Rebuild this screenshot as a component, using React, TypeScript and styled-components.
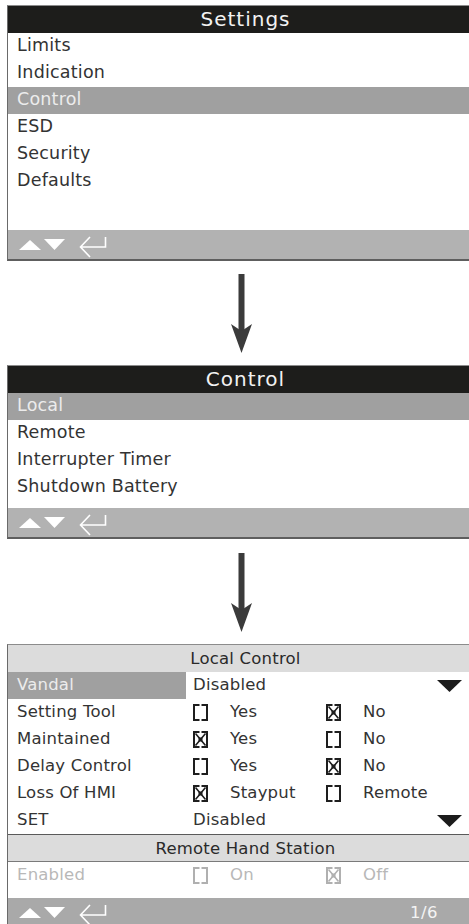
import React from "react";
import styled, { createGlobalStyle } from "styled-components";

const GlobalStyle = createGlobalStyle`
  html, body {
    margin: 0;
    padding: 0;
    background: #ffffff;
    overflow: hidden;
  }
  body {
    font-family: "DejaVu Sans", "Liberation Sans", sans-serif;
    color: #333333;
  }
`;

type Choice = { label: string; checked: boolean };

interface SettingItem {
  label: string;
  active?: boolean;
  dropdown?: string;
  options?: Choice[];
}

const localControl: SettingItem[] = [
  { label: "Vandal", active: true, dropdown: "Disabled" },
  {
    label: "Setting Tool",
    options: [
      { label: "Yes", checked: false },
      { label: "No", checked: true },
    ],
  },
  {
    label: "Maintained",
    options: [
      { label: "Yes", checked: true },
      { label: "No", checked: false },
    ],
  },
  {
    label: "Delay Control",
    options: [
      { label: "Yes", checked: false },
      { label: "No", checked: true },
    ],
  },
  {
    label: "Loss Of HMI",
    options: [
      { label: "Stayput", checked: true },
      { label: "Remote", checked: false },
    ],
  },
  { label: "SET", dropdown: "Disabled" },
];

// small drawings
const CheckBox: React.FC<{ checked: boolean; color: string }> = ({
  checked,
  color,
}) => (
  <svg width="15" height="17" viewBox="0 0 15 17">
    <path
      d="M6.5 1H1V16H6.5 M8.5 1H14V16H8.5"
      fill="none"
      stroke={color}
      strokeWidth="2"
    />
    {checked && (
      <>
        <path
          d="M2.5 2.5L12.5 14.5 M12.5 2.5L2.5 14.5"
          fill="none"
          stroke={color}
          strokeWidth="1.6"
        />
        <rect x="5.5" y="6.5" width="4" height="4" fill={color} />
      </>
    )}
  </svg>
);

const Caret = () => (
  <svg width="25" height="12" viewBox="0 0 25 12">
    <polygon points="0,0 25,0 12.5,12" fill="#1c1c1c" />
  </svg>
);

const DownArrow = () => (
  <svg width="21" height="79" viewBox="0 0 21 79">
    <rect x="7.5" y="0" width="6" height="57" fill="#3b3b3b" />
    <polygon points="0,50 10.5,57 21,50 10.5,79" fill="#3b3b3b" />
  </svg>
);

const NavIcons = () => (
  <NavGroup>
    <svg width="22" height="10" viewBox="0 0 22 10">
      <polygon points="0,10 22,10 11,0" fill="#ffffff" />
    </svg>
    <svg width="21" height="11" viewBox="0 0 21 11">
      <polygon points="0,0 21,0 10.5,11" fill="#ffffff" />
    </svg>
    <EnterIcon width="28" height="22" viewBox="0 0 28 22">
      <path
        d="M11 1L1.5 11L11 21 M1.5 11H26.5V1"
        fill="none"
        stroke="#ffffff"
        strokeWidth="1.6"
      />
    </EnterIcon>
  </NavGroup>
);

const MenuPanel: React.FC<{
  title: string;
  items: string[];
  active: number;
  spare: number;
}> = ({ title, items, active, spare }) => (
  <Panel>
    <Header $tone="dark">{title}</Header>
    {items.map((item, i) => (
      <MenuRow key={item} $active={i === active}>
        {item}
      </MenuRow>
    ))}
    <Spacer $h={spare} />
    <Footer $tone="light">
      <NavIcons />
    </Footer>
  </Panel>
);

export default function App() {
  return (
    <Page>
      <GlobalStyle />
      <MenuPanel
        title="Settings"
        items={["Limits", "Indication", "Control", "ESD", "Security", "Defaults"]}
        active={2}
        spare={35}
      />
      <ArrowRow>
        <DownArrow />
      </ArrowRow>
      <MenuPanel
        title="Control"
        items={["Local", "Remote", "Interrupter Timer", "Shutdown Battery"]}
        active={0}
        spare={7}
      />
      <ArrowRow $after={14}>
        <DownArrow />
      </ArrowRow>
      <Panel>
        <Header $tone="light">Local Control</Header>
        {localControl.map((row) => (
          <SettingRow key={row.label}>
            <SettingLabel $active={row.active}>{row.label}</SettingLabel>
            <ValueCell>
              {row.dropdown && (
                <>
                  <span>{row.dropdown}</span>
                  <CaretSlot>
                    <Caret />
                  </CaretSlot>
                </>
              )}
              {row.options?.map((opt) => (
                <Option key={opt.label}>
                  <CheckBox checked={opt.checked} color="#1e1e1e" />
                  <OptionText>{opt.label}</OptionText>
                </Option>
              ))}
            </ValueCell>
          </SettingRow>
        ))}
        <SubHeader>Remote Hand Station</SubHeader>
        <SettingRow $disabled>
          <SettingLabel>Enabled</SettingLabel>
          <ValueCell>
            <Option>
              <CheckBox checked={false} color="#b0b0b0" />
              <OptionText>On</OptionText>
            </Option>
            <Option>
              <CheckBox checked color="#b0b0b0" />
              <OptionText>Off</OptionText>
            </Option>
          </ValueCell>
        </SettingRow>
        <Spacer $h={9} />
        <Footer $tone="mid">
          <NavIcons />
          <PageCount>1/6</PageCount>
        </Footer>
      </Panel>
    </Page>
  );
}

const Page = styled.div`
  display: flex;
  flex-direction: column;
  align-items: flex-start;
  padding: 5px 0 0 7px;
`;

const Panel = styled.div`
  width: 476px;
  box-sizing: border-box;
  display: flex;
  flex-direction: column;
  border-top: 1px solid #8c8c8c;
  border-left: 1px solid #6a6a6a;
  border-bottom: 2px solid #5e5e5e;
`;

const Header = styled.div<{ $tone: "dark" | "light" }>`
  height: 27px;
  display: flex;
  align-items: center;
  justify-content: center;
  background: ${(p) => (p.$tone === "dark" ? "#1d1d1b" : "#dcdcdc")};
  color: ${(p) => (p.$tone === "dark" ? "#f2f2f2" : "#2a2a2a")};
  font-size: ${(p) => (p.$tone === "dark" ? "20px" : "16.5px")};
  letter-spacing: ${(p) => (p.$tone === "dark" ? "1px" : "0.2px")};
  padding-bottom: 1px;
  box-sizing: border-box;
`;

const SubHeader = styled.div`
  height: 28px;
  display: flex;
  align-items: center;
  justify-content: center;
  background: #dcdcdc;
  color: #2a2a2a;
  font-size: 16.5px;
  letter-spacing: 0.2px;
  border-top: 1px solid #5a5a5a;
  border-bottom: 1px solid #7a7a7a;
  box-sizing: border-box;
`;

const MenuRow = styled.div<{ $active?: boolean }>`
  height: 27px;
  line-height: 25px;
  padding-left: 9px;
  font-size: 17.5px;
  letter-spacing: 0.2px;
  background: ${(p) => (p.$active ? "#a0a0a0" : "transparent")};
  color: ${(p) => (p.$active ? "#ececec" : "#333333")};
`;

const Spacer = styled.div<{ $h: number }>`
  height: ${(p) => p.$h}px;
`;

const Footer = styled.div<{ $tone: "light" | "mid" }>`
  height: 29px;
  display: flex;
  align-items: center;
  padding-left: 11px;
  background: ${(p) => (p.$tone === "light" ? "#b2b2b2" : "#a9a9a9")};
`;

const NavGroup = styled.div`
  display: flex;
  align-items: center;
  gap: 3px;
`;

const EnterIcon = styled.svg`
  margin-left: 11px;
  margin-top: 4px;
`;

const PageCount = styled.span`
  margin-left: auto;
  margin-right: 45px;
  color: #f4f4f4;
  font-size: 16.5px;
  letter-spacing: 0.5px;
`;

const ArrowRow = styled.div<{ $after?: number }>`
  display: flex;
  padding-left: 224px;
  margin-top: ${(p) => p.$after ?? 13}px;
  margin-bottom: 12px;
`;

const SettingRow = styled.div<{ $disabled?: boolean }>`
  height: 27px;
  display: grid;
  grid-template-columns: 178px 1fr;
  font-size: 16.5px;
  letter-spacing: 0.2px;
  color: ${(p) => (p.$disabled ? "#b8b8b8" : "#333333")};
`;

const SettingLabel = styled.div<{ $active?: boolean }>`
  display: flex;
  align-items: center;
  padding-left: 9px;
  padding-bottom: 2px;
  background: ${(p) => (p.$active ? "#a0a0a0" : "transparent")};
  color: ${(p) => (p.$active ? "#ececec" : "inherit")};
`;

const ValueCell = styled.div`
  display: flex;
  align-items: center;
  padding: 0 21px 2px 7px;
`;

const CaretSlot = styled.span`
  display: flex;
  margin-left: auto;
  margin-top: 2px;
`;

const Option = styled.div`
  width: 133px;
  display: flex;
  align-items: center;
  & > svg {
    flex-shrink: 0;
    margin-top: 2px;
  }
`;

const OptionText = styled.span`
  margin-left: 22px;
`;
